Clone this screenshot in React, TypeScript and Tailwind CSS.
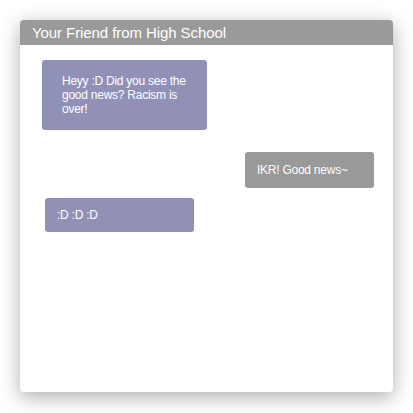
export default function App() {
  return (
    <div className="w-[413px] h-[413px] bg-white pt-5 pl-5" style={{ fontFamily: '"Liberation Sans", Arial, sans-serif' }}>
      <div className="w-[373px] h-[372px] bg-white rounded-[4px] overflow-hidden shadow-[0_5px_20px_rgba(0,0,0,0.33)] flex flex-col">
        <div className="h-[25px] bg-[#9a9a9a] text-white text-[15px] leading-[25px] pl-3 tracking-[-0.08px]">Your Friend from High School</div>
        <div className="flex flex-col pt-[15px]">
          <div className="ml-[22px] w-[165px] bg-[#9191b8] rounded-[3px] text-white text-[12px] leading-[14px] tracking-[-0.25px] pl-5 pr-3 py-[14px]">
            Heyy :D Did you see the good news? Racism is over!
          </div>
          <div className="self-end mr-[19px] mt-[22px] w-[129px] bg-[#999999] rounded-[3px] text-white text-[12px] leading-[14px] tracking-[-0.25px] pl-3 py-[11px]">
            IKR! Good news~
          </div>
          <div className="ml-[25px] mt-[10px] w-[149px] bg-[#9191b8] rounded-[3px] text-white text-[12px] leading-[14px] tracking-[-0.25px] pl-3 py-[10px]">
            :D :D :D
          </div>
        </div>
      </div>
    </div>
  );
}
